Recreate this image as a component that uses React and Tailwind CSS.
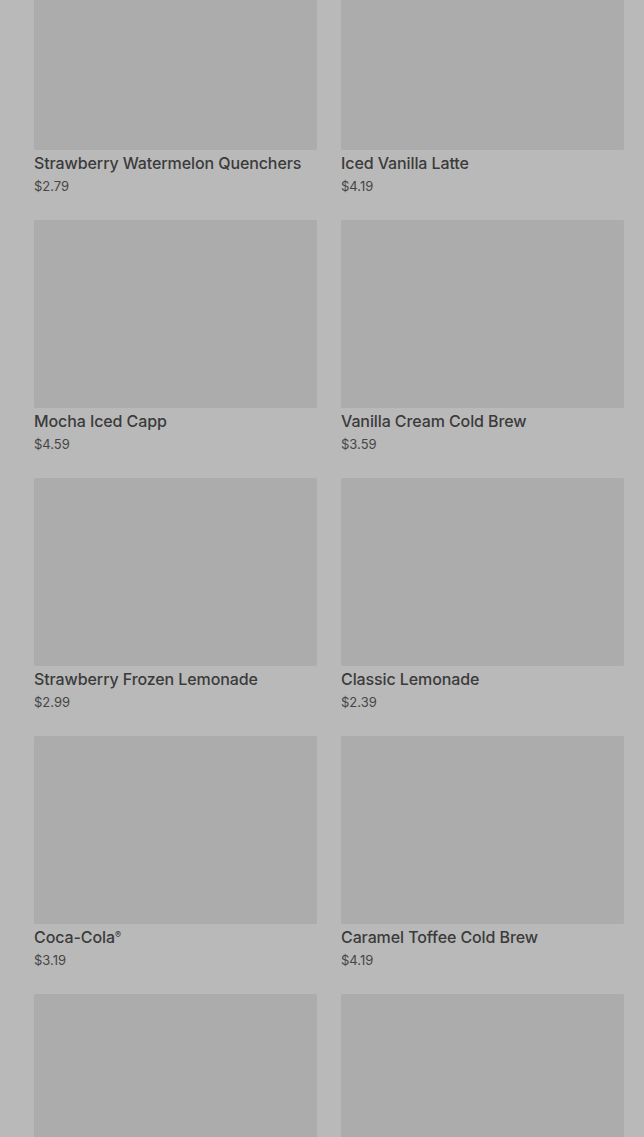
const items = [
  { name: "Strawberry Watermelon Quenchers", price: "$2.79" },
  { name: "Iced Vanilla Latte", price: "$4.19" },
  { name: "Mocha Iced Capp", price: "$4.59" },
  { name: "Vanilla Cream Cold Brew", price: "$3.59" },
  { name: "Strawberry Frozen Lemonade", price: "$2.99" },
  { name: "Classic Lemonade", price: "$2.39" },
  { name: "Coca-Cola", reg: true, price: "$3.19" },
  { name: "Caramel Toffee Cold Brew", price: "$4.19" },
  { name: "", price: "" },
  { name: "", price: "" },
];

function Card({ name, reg, price }) {
  return (
    <div className="flex flex-col h-[258px]">
      <div className="h-[188px] bg-[#acacac] rounded-[2px]" />
      <div className="mt-[3px] text-[16px] leading-[20px] font-medium tracking-[-0.1px] text-[#3b3b3b]">
        {name}
        {reg && <sup className="text-[9px] top-[-0.6em]">®</sup>}
      </div>
      <div className="mt-[5px] text-[13px] leading-[16px] text-[#464646]">{price}</div>
    </div>
  );
}

export default function App() {
  return (
    <div className="h-[1137px] overflow-hidden bg-[#b9b9b9] font-['Inter',sans-serif]">
      <div className="grid grid-cols-2 gap-x-[24px] pl-[34px] pr-[20px] -mt-[38px]">
        {items.map((it, i) => (
          <Card key={i} {...it} />
        ))}
      </div>
    </div>
  );
}
